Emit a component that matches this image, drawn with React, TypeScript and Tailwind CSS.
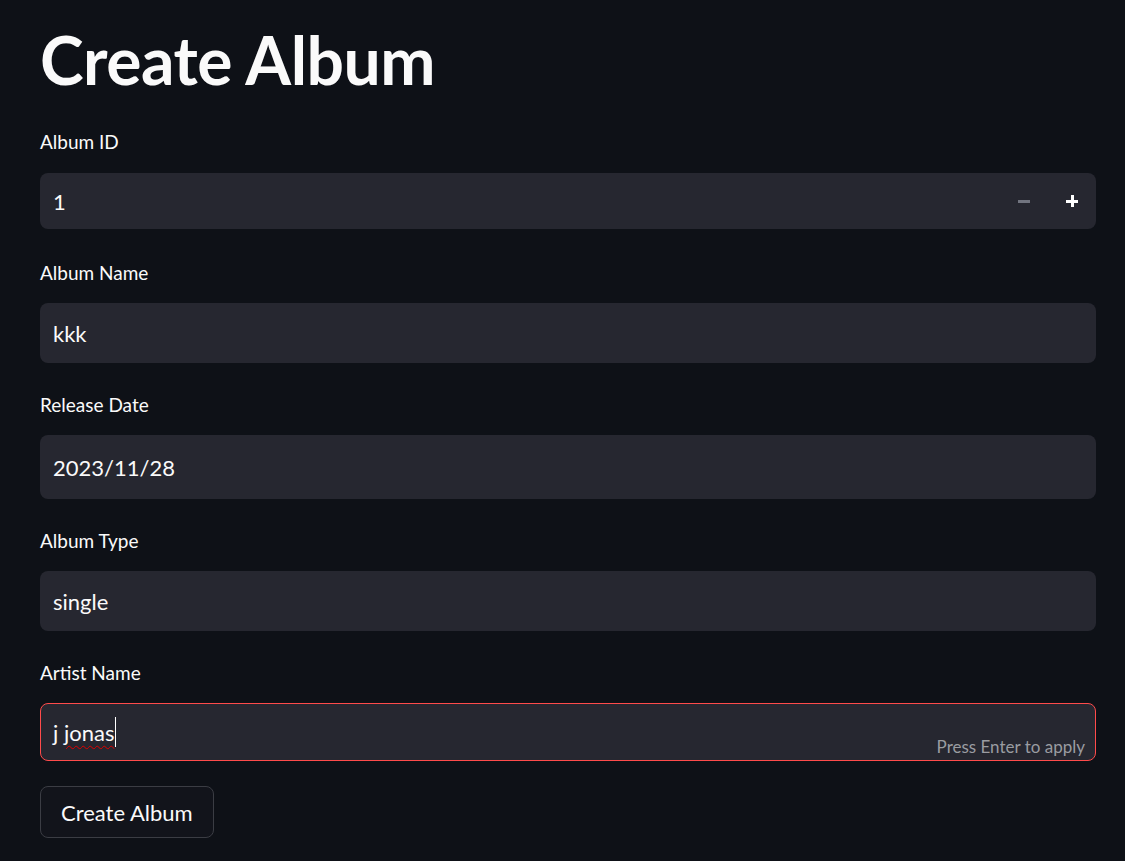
import React from "react";

const font = { fontFamily: "Lato, 'Noto Sans', sans-serif" };

const Label = ({ text, className }: { text: string; className: string }) => (
  <div className={"text-[19px] leading-6 text-[#fafafa] " + className}>{text}</div>
);

const Field = ({ value, h }: { value: React.ReactNode; h: string }) => (
  <div className={"flex items-center rounded-lg bg-[#262730] px-[13px] text-[22px] text-[#fafafa] " + h}>
    {value}
  </div>
);

const App = () => {
  return (
    <div className="min-h-[861px] w-full bg-[#0e1117] pl-10 pr-[29px] pt-[22px]" style={font}>
      <h1 className="text-[66px] font-bold leading-[76px] tracking-[-0.5px] text-[#fafafa]">Create Album</h1>

      <Label text="Album ID" className="mt-[32px] mb-[19px]" />
      <div className="flex h-[56px] items-center rounded-lg bg-[#262730] pl-[13px] text-[22px] text-[#fafafa]">
        <div className="flex-1">1</div>
        <div className="flex h-full w-12 items-center justify-center">
          <div className="h-[3px] w-3 bg-[#71747f]" />
        </div>
        <div className="relative flex h-full w-12 items-center justify-center">
          <div className="h-[3px] w-3 bg-white" />
          <div className="absolute h-3 w-[3px] bg-white" />
        </div>
      </div>

      <Label text="Album Name" className="mt-[32px] mb-[18px]" />
      <Field value="kkk" h="h-[60px]" />

      <Label text="Release Date" className="mt-[30px] mb-[18px]" />
      <Field value="2023/11/28" h="h-[64px]" />

      <Label text="Album Type" className="mt-[30px] mb-[18px]" />
      <Field value="single" h="h-[60px]" />

      <Label text="Artist Name" className="mt-[30px] mb-[18px]" />
      <div className="relative flex h-[58px] items-center rounded-lg border border-[#ff4b4b] bg-[#262730] px-3 text-[22px] text-[#fafafa]">
        <span>
          j{" "}
          <span className="underline decoration-wavy decoration-[#e00000] decoration-1 underline-offset-4">jonas</span>
        </span>
        <span className="ml-[1px] h-[30px] w-px bg-white" />
        <span className="absolute bottom-[1px] right-[10px] text-[17px] text-[#9a9ca1]">Press Enter to apply</span>
      </div>

      <button className="mt-[25px] flex h-[52px] items-center rounded-lg border border-[#3b3d44] bg-[#12141b] px-5 text-[22px] text-[#fafafa]">
        Create Album
      </button>
    </div>
  );
};

export default App;
